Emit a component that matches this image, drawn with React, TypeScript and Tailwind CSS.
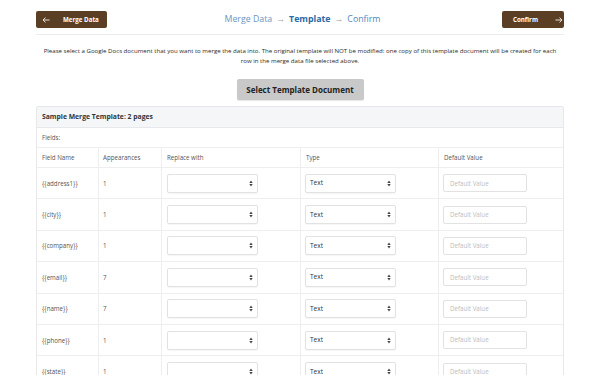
import React from "react";

const rows = [
  { name: "{{address1}}", n: "1" },
  { name: "{{city}}", n: "1" },
  { name: "{{company}}", n: "1" },
  { name: "{{email}}", n: "7" },
  { name: "{{name}}", n: "7" },
  { name: "{{phone}}", n: "1" },
  { name: "{{state}}", n: "1" },
];

function UpDown() {
  return (
    <svg width="4" height="7" viewBox="0 0 4 7" className="shrink-0">
      <path d="M0.3 3 L2 0.6 L3.7 3 Z" fill="#444" />
      <path d="M0.3 4 L2 6.4 L3.7 4 Z" fill="#444" />
    </svg>
  );
}

function Select({ value }: { value?: string }) {
  return (
    <div className="w-[91px] h-[19px] border border-[#e2e2e2] rounded-[2px] bg-white flex items-center justify-between pl-[4px] pr-[4px] shadow-[0_1px_1px_rgba(0,0,0,0.04)]">
      <span className="text-[6.5px] text-[#333]">{value ?? ""}</span>
      <UpDown />
    </div>
  );
}

export default function App() {
  return (
    <div
      className="w-[600px] h-[375px] overflow-hidden bg-white text-[#333]"
      style={{ fontFamily: '"Open Sans", "Liberation Sans", sans-serif' }}
    >
      <div className="mx-[36px] h-[35px] border-b border-[#ececec] flex items-start pt-[11px] justify-between">
        <div className="w-[71px] h-[17px] rounded-[2px] bg-[#5b3f25] flex items-center text-white">
          <svg width="8" height="6" viewBox="0 0 8 6" className="ml-[6px]">
            <path d="M7.5 3 H1 M3.5 0.6 L1 3 L3.5 5.4" stroke="#e9e0d6" strokeWidth="1" fill="none" />
          </svg>
          <span className="ml-[13px] text-[6.2px] font-bold">Merge Data</span>
        </div>
        <div className="flex items-center gap-[4px] text-[8.8px] mt-[1px] leading-[15px] -ml-[4px]">
          <span className="text-[#6b95c2]">Merge Data</span>
          <span className="text-[#9a9a9a] font-bold">→</span>
          <span className="text-[#2a6aa8] font-bold">Template</span>
          <span className="text-[#9a9a9a] font-bold">→</span>
          <span className="text-[#4f87c0]">Confirm</span>
        </div>
        <div className="w-[62px] h-[17px] rounded-[2px] bg-[#5b3f25] flex items-center text-white">
          <span className="ml-[11px] text-[6.2px] font-bold">Confirm</span>
          <svg width="8" height="6" viewBox="0 0 8 6" className="ml-[17px]">
            <path d="M0.5 3 H7 M4.5 0.6 L7 3 L4.5 5.4" stroke="#e9e0d6" strokeWidth="1" fill="none" />
          </svg>
        </div>
      </div>

      <p className="mt-[11px] text-center text-[6.1px] leading-[10px] text-[#2a2a2a]">
        Please select a Google Docs document that you want to merge the data into. The original template will NOT be modified: one copy of this template document will be created for each
        <br />
        row in the merge data file selected above.
      </p>

      <div className="flex justify-center mt-[13px]">
        <div className="w-[127px] h-[21px] rounded-[2px] bg-[#c9c9c9] flex items-center justify-center text-[8px] font-bold text-[#222] shadow-[0_1px_1px_rgba(0,0,0,0.1)]">
          Select Template Document
        </div>
      </div>

      <div className="mx-[36px] mt-[6px] border border-[#e6e8eb] rounded-[2px]">
        <div className="h-[21px] bg-[#f5f6f8] border-b border-[#e6e8eb] flex items-center px-[5px] text-[6.8px] font-bold text-[#333]">
          Sample Merge Template: 2 pages
        </div>
        <div className="h-[20px] border-b border-[#eceef0] flex items-center px-[5px] text-[6.2px] text-[#555]">
          Fields:
        </div>
        <div className="grid grid-cols-[61px_63px_139px_138px_1fr] h-[20px] border-b border-[#eceef0] text-[6.2px] text-[#555]">
          <div className="flex items-center px-[5px]">Field Name</div>
          <div className="flex items-center px-[4px] border-l border-[#eceef0]">Appearances</div>
          <div className="flex items-center px-[5px] border-l border-[#eceef0]">Replace with</div>
          <div className="flex items-center px-[5px] border-l border-[#eceef0]">Type</div>
          <div className="flex items-center px-[5px] border-l border-[#eceef0]">Default Value</div>
        </div>
        {rows.map((r) => (
          <div
            key={r.name}
            className="grid grid-cols-[61px_63px_139px_138px_1fr] h-[31.4px] border-b border-[#eceef0] text-[6.2px] text-[#555]"
          >
            <div className="flex items-center px-[5px]">{r.name}</div>
            <div className="flex items-center px-[4px] border-l border-[#eceef0]">{r.n}</div>
            <div className="flex items-center px-[5px] border-l border-[#eceef0]">
              <Select />
            </div>
            <div className="flex items-center px-[4px] border-l border-[#eceef0]">
              <Select value="Text" />
            </div>
            <div className="flex items-center px-[4px] border-l border-[#eceef0]">
              <div className="w-[84px] h-[18px] border border-[#e2e2e2] rounded-[2px] flex items-center px-[6px] text-[6.2px] text-[#bdbdbd]">
                Default Value
              </div>
            </div>
          </div>
        ))}
      </div>
    </div>
  );
}
